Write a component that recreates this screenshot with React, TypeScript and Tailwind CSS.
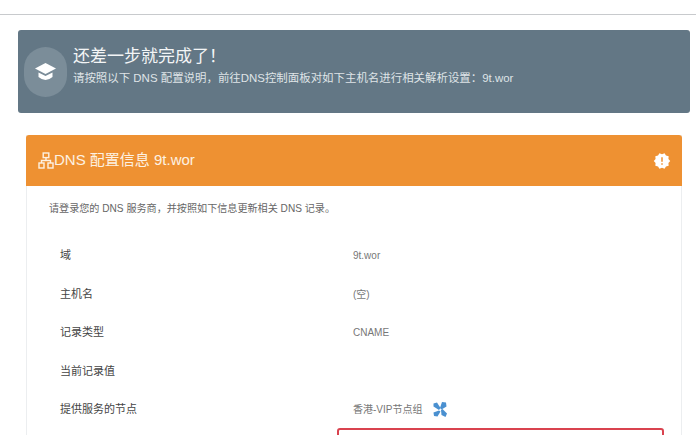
import { MdNewReleases } from 'react-icons/md';

const FONT = "font-['Liberation_Sans','Noto_Sans_CJK_SC',sans-serif]";

const rows = [
  { label: '域', value: '9t.wor' },
  { label: '主机名', value: '(空)' },
  { label: '记录类型', value: 'CNAME' },
  { label: '当前记录值', value: '' },
  { label: '提供服务的节点', value: '香港-VIP节点组', fan: true },
];

function CapIcon() {
  return (
    <svg width="21" height="18" viewBox="0 0 21 18" fill="#fff">
      <path d="M10.5 0 21 5.5 10.5 11 0 5.5z" />
      <path d="M3.5 9.5 10.5 13 17.5 9.5V14Q10.5 20 3.5 14z" />
    </svg>
  );
}

function NetworkIcon() {
  return (
    <svg width="16" height="17" viewBox="0 0 16 17" fill="none" stroke="#fdf1e2" strokeWidth="1.4">
      <rect x="5.2" y="1" width="5.6" height="4.6" />
      <path d="M8 5.6V8.5M3.5 11V8.5H12.5V11" />
      <rect x="1" y="11" width="5" height="5" />
      <rect x="10" y="11" width="5" height="5" />
    </svg>
  );
}

function FanIcon() {
  return (
    <svg width="14" height="15" viewBox="0 0 14 15" fill="#4a90d0" className="ml-[11px]">
      <path d="M0.5 1.5 4 0.5 7.5 6 6 8 0.5 4.5z" />
      <path d="M9 0 13 0.5 13.5 4.5 8.5 7.5 7 6z" />
      <path d="M8 8 9.5 7 14 11.5 12.5 15 8.5 13z" />
      <path d="M6 8.5 7.5 9.5 4.5 14.5 1 14 0.5 10.5z" />
    </svg>
  );
}

export default function App() {
  return (
    <div className={`h-[435px] w-[696px] overflow-hidden bg-white ${FONT}`}>
      <div className="h-[15px] border-b border-[#c8cacd] bg-white" />

      <div className="mx-[18px] mr-[6px] mt-[15px] flex h-[83px] items-center rounded-[3px] bg-[#637785] pl-[6px]">
        <div className="flex h-[50px] w-[43px] items-center justify-center rounded-full bg-[#7b8d99]">
          <CapIcon />
        </div>
        <div className="mb-[13px] ml-[6px] text-white">
          <div className="text-[17px] leading-[24px] text-[#f3f5f6]">还差一步就完成了！</div>
          <div className="mt-[2px] text-[11.45px] leading-[14px] text-[#dfe4e7]">
            请按照以下 DNS 配置说明，前往DNS控制面板对如下主机名进行相关解析设置：9t.wor
          </div>
        </div>
      </div>

      <div className="ml-[26px] mr-[14px] mt-[22px] border-x border-[#eceef0]">
        <div className="-mx-px flex h-[51px] items-center justify-between rounded-t-[3px] bg-[#ee9132] pl-[12px] pr-[11px] text-[#fdf1e2]">
          <div className="flex items-center text-[15px]">
            <NetworkIcon />
            <span>DNS 配置信息 9t.wor</span>
          </div>
          <MdNewReleases className="text-[18px] text-white" />
        </div>

        <div className="pl-[22px] pt-[16px] text-[10.1px] leading-[14px] text-[#666]">
          请登录您的 DNS 服务商，并按照如下信息更新相关 DNS 记录。
        </div>

        <div className="mt-[20.5px]">
          {rows.map((r) => (
            <div key={r.label} className="flex h-[38.4px] items-center">
              <div className="ml-[33px] w-[293px] text-[11px] text-[#444]">{r.label}</div>
              <div className="flex items-center text-[10px] text-[#777]">
                {r.value}
                {r.fan && <FanIcon />}
              </div>
            </div>
          ))}
        </div>

        <div className="ml-[310px] mr-[17px] h-[30px] rounded-[3px] border-2 border-[#d9434f]" />
      </div>
    </div>
  );
}
